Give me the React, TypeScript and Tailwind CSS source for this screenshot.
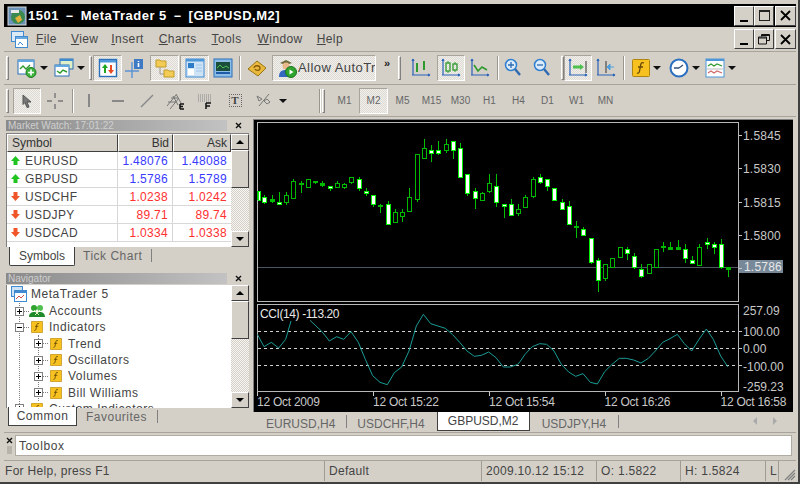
import type { ReactNode } from "react";

const raised = "border border-t-white border-l-white border-r-[#404040] border-b-[#404040] bg-[#d4d0c8]";
const pressed =
  "border border-t-[#a8a49c] border-l-[#a8a49c] border-r-white border-b-white bg-[repeating-conic-gradient(#dedbd5_0_25%,#f0efeb_0_50%)] bg-[length:2px_2px]";

// [wickTop, wickBottom, bodyTop, bodyBottom, kind] in 3x crop units; kind 0 hollow, 1 white, 2 solid
const candles: number[][] = [
  [224, 252, 224, 252, 1], [238, 265, 243, 258, 1], [238, 260, 250, 254, 2], [228, 266, 257, 265, 1],
  [228, 267, 238, 257, 0], [188, 246, 196, 245, 0], [196, 231, 200, 202, 2], [188, 213, 189, 212, 0],
  [196, 204, 196, 198, 2], [196, 213, 202, 206, 2], [209, 226, 211, 217, 1], [196, 217, 202, 212, 0],
  [202, 218, 203, 212, 0], [182, 203, 183, 197, 0], [182, 226, 189, 217, 1], [217, 239, 224, 231, 1],
  [238, 272, 238, 265, 1], [263, 291, 268, 270, 2], [255, 326, 265, 325, 1], [278, 318, 289, 317, 0],
  [278, 318, 289, 299, 0], [216, 286, 243, 285, 0], [115, 258, 115, 250, 0], [68, 125, 97, 125, 0],
  [87, 138, 102, 110, 1], [74, 116, 102, 110, 1], [68, 110, 83, 103, 0], [74, 130, 74, 102, 1],
  [82, 185, 97, 184, 1], [175, 240, 175, 231, 1], [216, 280, 224, 245, 1], [229, 253, 230, 253, 0],
  [175, 231, 202, 225, 0], [175, 272, 211, 258, 1], [265, 305, 265, 271, 1], [250, 298, 265, 298, 1],
  [265, 300, 278, 290, 0], [238, 272, 243, 272, 0], [183, 245, 189, 239, 0], [175, 203, 183, 197, 1],
  [189, 225, 189, 211, 1], [216, 253, 217, 252, 1], [250, 281, 257, 279, 1], [256, 326, 271, 325, 1],
  [316, 367, 330, 332, 2], [332, 360, 338, 358, 1], [365, 445, 366, 439, 1], [425, 527, 431, 493, 1],
  [445, 495, 445, 486, 0], [425, 455, 425, 453, 0], [392, 425, 392, 422, 0], [392, 432, 398, 412, 1],
  [412, 458, 420, 452, 1], [445, 485, 458, 480, 1], [445, 473, 445, 472, 0], [398, 454, 398, 453, 0],
  [378, 407, 390, 394, 2], [378, 400, 392, 399, 2], [371, 400, 392, 399, 2], [385, 440, 398, 426, 1],
  [420, 445, 431, 440, 1], [385, 447, 392, 446, 0], [365, 400, 378, 385, 1], [378, 413, 385, 394, 1],
  [370, 458, 385, 453, 1], [452, 482, 452, 458, 2],
];

const cciLeft = "22,100 42,137 64,124 86,141 107,115 123,60";
const cciA = [[180,58],[216,92],[238,120],[260,107],[281,115],[303,92],[325,124],[346,175],[368,224],[390,244],[412,251],[433,215],[455,198],[477,150],[499,75],[520,40],[542,68],[564,75],[586,82],[607,100],[629,124],[651,150],[673,166],[694,163],[716,153],[738,170],[760,198],[781,198],[803,190]];
const cciB = [[0,182],[15,160],[37,137],[59,128],[80,130],[102,150],[124,190],[146,213],[167,226],[189,218],[211,244],[232,249],[254,212],[276,190],[298,172],[319,172],[341,177],[363,186],[385,172],[406,150],[428,124],[450,113],[472,100],[493,128],[515,150],[537,115],[559,84],[580,115],[602,165],[624,198]];

const pts1 = cciLeft.split(" ").map((p) => {
  const [x, y] = p.split(",").map(Number);
  return `${250 + x / 3},${300 + y / 3}`;
}).join(" ");
const pts2 = [...cciA.map(([x, y]) => [250 + x / 3, 300 + y / 3]), ...cciB.map(([x, y]) => [520 + x / 3, 300 + y / 3])]
  .map((p) => p.join(",")).join(" ");

const Arrow = () => <span className="ml-[3px] h-0 w-0 shrink-0 border-x-[4px] border-t-[4px] border-x-transparent border-t-[#111]" />;
const Grip = ({ className = "" }: { className?: string }) => (
  <div className={`h-[24px] w-[3px] shrink-0 border border-t-white border-l-white border-r-[#808080] border-b-[#808080] ${className}`} />
);
const Sep = ({ className = "" }: { className?: string }) => (
  <div className={`h-[24px] w-[2px] shrink-0 border-l border-r border-l-[#9a968e] border-r-white ${className}`} />
);
const Tool = ({ children, w = 28, active = false, className = "" }: { children: ReactNode; w?: number; active?: boolean; className?: string }) => (
  <div
    style={{ width: w }}
    className={`flex h-[26px] shrink-0 items-center justify-center ${active ? pressed : ""} ${className}`}
  >
    {children}
  </div>
);

const Axes = ({ children }: { children?: ReactNode }) => (
  <svg width="20" height="20" viewBox="0 0 20 20" fill="none">
    <path d="M2 1v16M1 17h18M2 1l-1 2M2 1l1 2M19 17l-2-1M19 17l-2 1" stroke="#2a62b8" strokeWidth="1.2" />
    {children}
  </svg>
);
const NewChartIcon = () => (
  <svg width="20" height="20" viewBox="0 0 20 20" fill="none">
    <rect x="1" y="2" width="16" height="14" fill="#fff" stroke="#2a6fb8" />
    <path d="M1 2h16v2H1z" fill="#62a8e0" />
    <path d="M3 11l3-3 3 3 4-4" stroke="#2e9a2e" strokeWidth="1.4" />
    <circle cx="14" cy="14.500" r="5" fill="#3cb43c" stroke="#1d7a1d" />
    <path d="M14 11.500v6M11 14.500h6" stroke="#fff" strokeWidth="1.6" />
  </svg>
);
const ProfileIcon = () => (
  <svg width="20" height="20" viewBox="0 0 20 20" fill="none">
    <rect x="6" y="1" width="13" height="10" fill="#dff0c8" stroke="#2a6fb8" />
    <path d="M6 1h13v2H6z" fill="#3c8ad0" />
    <rect x="1" y="7" width="14" height="11" fill="#fff" stroke="#2a6fb8" />
    <path d="M1 7h14v2H1z" fill="#62a8e0" />
    <path d="M3 13l3 2 3-3 4 2" stroke="#2e9a2e" strokeWidth="1.4" />
  </svg>
);
const WatchIcon = () => (
  <svg width="20" height="20" viewBox="0 0 20 20" fill="none">
    <rect x="1.500" y="1.500" width="17" height="17" fill="#fff" stroke="#2a6fb8" strokeWidth="1.4" />
    <path d="M2 2h16v2.500H2z" fill="#4d97d8" />
    <path d="M7 6l3 4H8v5H6v-5H4z" fill="#1fa51f" />
    <path d="M13 16l-3-4h2V7h2v5h2z" fill="#e84b22" />
  </svg>
);
const DataIcon = () => (
  <svg width="20" height="20" viewBox="0 0 20 20" fill="none">
    <path d="M8 4v16M1 13h14" stroke="#5b93d6" strokeWidth="1.4" />
    <rect x="10" y="1" width="9" height="10" fill="#3f7ac4" />
    <path d="M14.500 3v1M14.500 5v4" stroke="#fff" strokeWidth="1.6" />
  </svg>
);
const FolderIcon = () => (
  <svg width="20" height="20" viewBox="0 0 20 20" fill="none">
    <path d="M1 2h4l1 1h5v6H1z" fill="#f2cc55" stroke="#c29b28" />
    <path d="M5 9v7h4" stroke="#9a968e" />
    <path d="M9 12h4l1 1h5v6H9z" fill="#f2cc55" stroke="#c29b28" />
  </svg>
);
const NavPanelIcon = () => (
  <svg width="20" height="20" viewBox="0 0 20 20" fill="none">
    <rect x="1" y="1" width="18" height="18" fill="#cfe3f7" stroke="#3f8ad0" />
    <path d="M1 1h18v2.500H1z" fill="#4d97d8" />
    <rect x="3" y="5" width="6" height="5" fill="#2d7cc8" />
    <rect x="3" y="11" width="6" height="6" fill="#fff" />
    <path d="M11 7h6M11 10h6M11 13h6" stroke="#9fc4e8" />
  </svg>
);
const TerminalIcon = () => (
  <svg width="20" height="20" viewBox="0 0 20 20" fill="none">
    <rect x="1" y="1" width="18" height="18" fill="#8cbce8" stroke="#2a6fb8" />
    <rect x="3" y="4" width="14" height="9" fill="#1a4d3a" />
    <path d="M4 10l3-3 3 3 3-2 3 2" stroke="#52c052" />
    <path d="M3 15h14" stroke="#1f5ca8" strokeWidth="2" />
  </svg>
);
const BookIcon = () => (
  <svg width="20" height="20" viewBox="0 0 20 20" fill="none">
    <path d="M1 11L10 3l9 7-8 8z" fill="#e8b93a" stroke="#9a7414" />
    <path d="M7 10c0-3 6-3 6 0s-4 3-5 1" stroke="#8a5a10" strokeWidth="1.300" />
  </svg>
);
const AutoTradeIcon = () => (
  <svg width="20" height="20" viewBox="0 0 20 20" fill="none" className="shrink-0">
    <path d="M3 5l6-3 6 3-6 2z" fill="#6d6a3a" />
    <circle cx="9" cy="8" r="3.500" fill="#e8b88a" />
    <path d="M2 19c0-6 3-7 7-7s6 2 6 7z" fill="#3468c0" />
    <circle cx="14" cy="14" r="5.500" fill="#2fa52f" stroke="#1a751a" />
    <path d="M12.500 11.500v5l4-2.500z" fill="#fff" />
  </svg>
);
const ZoomIcon = ({ plus }: { plus?: boolean }) => (
  <svg width="18" height="20" viewBox="0 0 18 20" fill="none">
    <circle cx="7" cy="7" r="5.500" fill="#dcecfb" stroke="#2e7fd0" strokeWidth="1.500" />
    <path d={plus ? "M4 7h6M7 4v6" : "M4 7h6"} stroke="#2e6ab0" strokeWidth="1.300" />
    <path d="M11 11l5 6" stroke="#2e6ab0" strokeWidth="2.400" />
  </svg>
);
const FuncIcon = ({ size = 18 }: { size?: number }) => (
  <svg width={size} height={size} viewBox="0 0 18 18" fill="none">
    <rect x="0.500" y="0.500" width="17" height="17" rx="1" fill="#f7c21f" stroke="#b08410" />
    <path d="M12 4c-2-1-3 0-3.300 2L7.500 12c-.3 2-1.500 2.500-2.500 2M6 8h5" stroke="#6a4a08" strokeWidth="1.300" />
  </svg>
);
const ClockIcon = () => (
  <svg width="20" height="20" viewBox="0 0 20 20" fill="none">
    <circle cx="10" cy="10" r="8.500" fill="#fff" stroke="#2a6fc0" strokeWidth="2" />
    <path d="M10 10l4-3M10 10H5" stroke="#33507a" strokeWidth="1.300" />
  </svg>
);
const OscIcon = () => (
  <svg width="20" height="20" viewBox="0 0 20 20" fill="none">
    <rect x="1" y="1" width="18" height="18" fill="#fff" stroke="#4d97d8" />
    <path d="M1 1h18v2H1z" fill="#4d97d8" />
    <path d="M3 8l3-2 3 2 3-2 5 2" stroke="#2e9a2e" strokeWidth="1.200" />
    <path d="M2 11h16" stroke="#bbb" />
    <path d="M3 15l3-2 3 2 3-2 5 2" stroke="#d06a6a" strokeWidth="1.200" />
  </svg>
);

const Fn = ({ label, active, className = "" }: { label: string; active?: boolean; className?: string }) => (
  <div className={`flex h-[26px] w-[29px] shrink-0 items-center justify-center text-[10px] text-[#666] ${active ? pressed : ""} ${className}`}>{label}</div>
);

const Menu = ({ first, rest, left }: { first: string; rest: string; left: number }) => (
  <span style={{ marginLeft: left }} className="text-[12px] tracking-[0.4px] text-[#444]">
    <span className="underline">{first}</span>
    {rest}
  </span>
);

const CloseGlyph = () => (
  <svg width="7" height="7" viewBox="0 0 7 7"><path d="M1 1l5 5M6 1L1 6" stroke="#111" strokeWidth="1.400" /></svg>
);
const PanelTitle = ({ text }: { text: string }) => (
  <div className="flex h-[11px] items-center bg-gradient-to-r from-[#8a8a8a] to-[#c8c8c8] pl-[2px] text-[10px] leading-none text-[#cfcfcf]">
    <span className="flex-1">{text}</span>
    <span className="flex h-full w-[22px] items-center justify-center bg-[#d4d0c8]"><CloseGlyph /></span>
  </div>
);

const Scrollbar = ({ thumb }: { thumb: number }) => (
  <div className="flex w-[18px] shrink-0 flex-col">
    <div className={`flex h-[16px] items-center justify-center ${raised}`}>
      <span className="h-0 w-0 border-x-[4px] border-b-[4px] border-x-transparent border-b-black" />
    </div>
    <div style={{ height: thumb }} className={raised} />
    <div className="flex-1 bg-[repeating-conic-gradient(#d4d0c8_0_25%,#f6f5f2_0_50%)] bg-[length:2px_2px]" />
    <div className={`flex h-[16px] items-center justify-center ${raised}`}>
      <span className="h-0 w-0 border-x-[4px] border-t-[4px] border-x-transparent border-t-black" />
    </div>
  </div>
);

const quotes = [
  { s: "EURUSD", b: "1.48076", a: "1.48088", up: true },
  { s: "GBPUSD", b: "1.5786", a: "1.5789", up: true },
  { s: "USDCHF", b: "1.0238", a: "1.0242", up: false },
  { s: "USDJPY", b: "89.71", a: "89.74", up: false },
  { s: "USDCAD", b: "1.0334", a: "1.0338", up: false },
];

const QuoteArrow = ({ up }: { up: boolean }) => (
  <svg width="11" height="11" viewBox="0 0 11 11" className="ml-[3px] mr-[4px] shrink-0">
    {up ? <path d="M5.500 1L10 6H7.500v4h-4V6H1z" fill="#1fc41f" /> : <path d="M5.500 10L10 5H7.500V1h-4v4H1z" fill="#f0552a" />}
  </svg>
);

const MarketWatch = () => (
  <div className="flex flex-col">
    <PanelTitle text="Market Watch: 17:01:22" />
    <div className="mt-[2px] flex h-[114px] border-l border-t border-[#808080]">
      <div className="flex flex-1 flex-col overflow-hidden bg-white">
        <div className="flex h-[18px] shrink-0 bg-[#d4d0c8] text-[12px] text-[#333]">
          <div className={`w-[111px] pl-[4px] leading-[16px] ${raised}`}>Symbol</div>
          <div className={`w-[55px] pr-[3px] text-right leading-[16px] ${raised}`}>Bid</div>
          <div className={`flex-1 pr-[3px] text-right leading-[16px] ${raised}`}>Ask</div>
        </div>
        {quotes.map((q) => (
          <div key={q.s} className={`flex h-[18px] shrink-0 items-center border-b border-[#d8d8d8] text-[12px] ${q.up ? "text-[#3a3aff]" : "text-[#ff3030]"}`}>
            <div className="flex w-[111px] items-center border-r border-[#d8d8d8] text-[#444]">
              <QuoteArrow up={q.up} />
              <span className="tracking-[0.4px]">{q.s}</span>
            </div>
            <div className="w-[55px] border-r border-[#d8d8d8] pr-[4px] text-right tracking-[0.3px]">{q.b}</div>
            <div className="flex-1 pr-[4px] text-right tracking-[0.3px]">{q.a}</div>
          </div>
        ))}
      </div>
      <Scrollbar thumb={38} />
    </div>
    <div className="flex h-[19px] items-start pl-[3px] text-[12px] text-[#666]">
      <div className="flex h-[19px] w-[66px] items-center justify-center rounded-b-[2px] border border-t-0 border-[#404040] bg-white text-[#444]">Symbols</div>
      <span className="ml-[8px] leading-[18px] tracking-[0.5px]">Tick Chart</span>
      <span className="ml-[9px] mt-[2px] h-[13px] w-px bg-[#808080]" />
    </div>
  </div>
);

const Expander = ({ open }: { open?: boolean }) => (
  <span className="relative flex h-[9px] w-[9px] shrink-0 items-center justify-center border border-[#808080] bg-white">
    <span className="absolute h-px w-[5px] bg-black" />
    {!open && <span className="absolute h-[5px] w-px bg-black" />}
  </span>
);
const Dots = () => <span className="w-[5px] shrink-0 border-t border-dotted border-[#808080]" />;

const AccountsIcon = () => (
  <svg width="16" height="14" viewBox="0 0 16 14">
    <circle cx="5" cy="4" r="3" fill="#2fa52f" />
    <circle cx="11" cy="4" r="3" fill="#4fc04f" />
    <path d="M0 13c0-4 3-5 5-5s5 1 5 5zM7 13c0-4 2-5 4-5s5 1 5 5z" fill="#1e8a2a" />
    <path d="M5 6l5 5M11 6l-5 5" stroke="#e0f0c0" />
  </svg>
);

const TreeRow = ({ indent, label, icon, open }: { indent: number; label: string; icon: ReactNode; open?: boolean }) => (
  <div style={{ paddingLeft: indent }} className="flex h-[16.300px] shrink-0 items-center text-[12px] tracking-[0.5px] text-[#444]">
    <Expander open={open} />
    <Dots />
    <span className="mr-[4px] flex w-[16px] justify-center">{icon}</span>
    <span>{label}</span>
  </div>
);

const Navigator = () => (
  <div className="mt-[7px] flex flex-col">
    <PanelTitle text="Navigator" />
    <div className="mt-[1px] flex h-[123px] border-l border-[#808080]">
      <div className="relative flex flex-1 flex-col overflow-hidden bg-white">
        <div className="absolute bottom-0 left-[12px] top-[18px] border-l border-dotted border-[#808080]" />
        <div className="absolute left-[31px] top-[50px] h-[66px] border-l border-dotted border-[#808080]" />
        <div className="flex h-[18px] shrink-0 items-center pl-[4px] text-[12px] tracking-[0.5px] text-[#444]">
          <svg width="16" height="16" viewBox="0 0 16 16" className="mr-[4px]">
            <rect x="0.500" y="0.500" width="11" height="10" fill="#cfe3f7" stroke="#3f8ad0" />
            <rect x="3.500" y="4.500" width="12" height="11" fill="#fff" stroke="#3f8ad0" />
            <path d="M4 5h11v2H4z" fill="#3f8ad0" />
            <path d="M5 13l3-3 2 2 3-3" stroke="#d05050" fill="none" />
          </svg>
          MetaTrader 5
        </div>
        <div className="relative flex flex-col">
          <TreeRow indent={8} label="Accounts" icon={<AccountsIcon />} />
          <TreeRow indent={8} label="Indicators" icon={<FuncIcon size={12} />} open />
          <TreeRow indent={27} label="Trend" icon={<FuncIcon size={12} />} />
          <TreeRow indent={27} label="Oscillators" icon={<FuncIcon size={12} />} />
          <TreeRow indent={27} label="Volumes" icon={<FuncIcon size={12} />} />
          <TreeRow indent={27} label="Bill Williams" icon={<FuncIcon size={12} />} />
          <TreeRow indent={8} label="Custom Indicators" icon={<FuncIcon size={12} />} />
        </div>
      </div>
      <Scrollbar thumb={38} />
    </div>
    <div className="relative z-10 flex h-[18px] items-start pl-[2px] text-[12px] text-[#666]">
      <div className="-mt-[1px] flex h-[19px] w-[69px] items-center justify-center border border-t-0 border-[#404040] bg-white tracking-[0.5px] text-[#444]">Common</div>
      <span className="ml-[9px] leading-[18px] tracking-[0.5px]">Favourites</span>
      <span className="ml-[10px] mt-[2px] h-[13px] w-px bg-[#808080]" />
    </div>
  </div>
);

const Chart = () => {
  const mono = "'Liberation Sans',sans-serif";
  const pLabels = [["1.5845", 138.5, 134], ["1.5830", 172, 167], ["1.5815", 205.500, 201], ["1.5800", 239, 234]] as const;
  const cLabels = [["257.09", 314], ["100.00", 335], ["0.00", 352], ["-100.00", 369.500], ["-259.23", 389.500]] as const;
  const xLabels = [["12 Oct 2009", 257], ["12 Oct 15:22", 373], ["12 Oct 15:54", 489], ["12 Oct 16:26", 604.500], ["12 Oct 16:58", 720.500]] as const;
  return (
    <div className="h-[293px] w-[540px] border-l border-t border-[#808080] bg-black">
      <svg width="540" height="293" viewBox="254 119 540 293" fontFamily={mono} fontSize="12" fill="#c8c8c8">
        <rect x="257.500" y="121.500" width="481" height="179" fill="none" stroke="#b8b8b8" />
        <rect x="257.500" y="303.500" width="481" height="87" fill="none" stroke="#b8b8b8" />
        <path d="M258 266.500H738" stroke="#4a5662" />
        {candles.map((c, i) => {
          const cx = Math.round(257 + 7.25 * i) + 0.5;
          const [wt, wb, bt, bb, kind] = c.map((v, j) => (j < 4 ? Math.round(115 + v / 3) : v));
          const top = bt + 0.5;
          const h = Math.max(bb - bt, 1);
          const clipLeft = i === 0;
          return (
            <g key={i} shapeRendering="crispEdges">
              <path d={`M${cx} ${wt}V${wb}`} stroke="#00c000" />
              {clipLeft ? (
                <rect x={258} y={top} width={2} height={h} fill="#fff" stroke="#00f000" />
              ) : (
                <rect x={cx - 2} y={top} width={4} height={h} fill={kind === 1 ? "#fff" : kind === 2 ? "#00c000" : "#000"} stroke={kind === 1 ? "#00f000" : "#00b800"} />
              )}
            </g>
          );
        })}
        <path d="M258 330.500H738M258 347.500H738M258 364.500H738" stroke="#d0d0d0" strokeDasharray="3 3" />
        <polyline points={pts1} fill="none" stroke="#1a9c96" />
        <polyline points={pts2} fill="none" stroke="#1a9c96" />
        <rect x="259" y="305" width="85" height="14" fill="#000" />
        <text x="260" y="317" fill="#e8e8e8" letterSpacing="-0.4">CCI(14) -113.20</text>
        {pLabels.map(([t, y, tick]) => (
          <g key={t}>
            <path d={`M739 ${tick + 0.5}h3`} stroke="#c8c8c8" />
            <text x="743" y={y} letterSpacing="0.2">{t}</text>
          </g>
        ))}
        <rect x="739" y="259" width="44" height="13" fill="#778899" />
        <path d="M739 267.500h3" stroke="#c8c8c8" />
        <text x="744" y="270" fill="#e8e8e8" letterSpacing="0.2">1.5786</text>
        {cLabels.map(([t, y]) => (
          <text key={t} x={743} y={y}>{t}</text>
        ))}
        <path d="M739 330.500h3M739 347.500h3M739 364.500h3" stroke="#c8c8c8" />
        {xLabels.map(([t, x]) => (
          <g key={t}>
            <path d={`M${Math.round(x) + 0.5} 391v4`} stroke="#c8c8c8" />
            <text x={x} y="405" letterSpacing="-0.25">{t}</text>
          </g>
        ))}
      </svg>
    </div>
  );
};

const StatusCell = ({ w, children }: { w: number; children?: ReactNode }) => (
  <div style={{ width: w }} className="flex h-full shrink-0 items-center overflow-hidden border-r border-[#a09c94] pl-[4px] text-[12px] tracking-[0.3px] text-[#444]">
    {children}
  </div>
);

export default function App() {
  return (
    <div className="flex h-[484px] w-[800px] flex-col overflow-hidden border-b-2 border-r-2 border-b-[#404040] border-r-[#404040] bg-[#d4d0c8] pl-[4px] pr-[2px] pt-[4px] [font-family:'Liberation_Sans',sans-serif]">
      <div className="flex h-[23px] shrink-0 items-center bg-black pl-[3px] text-white">
        <svg width="20" height="20" viewBox="0 0 20 20">
          <rect x="1" y="1" width="18" height="18" fill="#6b92b8" stroke="#d8d8d8" />
          <circle cx="11" cy="11" r="7" fill="#3a8a50" />
          <path d="M4 4h8v3H4z" fill="#e8e8e8" />
          <path d="M8 12l5-3 2 5-4 3z" fill="#e2b13a" />
        </svg>
        <span className="ml-[1px] flex-1 text-[13px] font-bold tracking-[0.5px]">1501 － MetaTrader 5 － [GBPUSD,M2]</span>
        <div className="flex">
          <div className={`flex h-[20px] w-[20px] items-end justify-center pb-[3px] ${raised}`}><span className="h-[2px] w-[8px] bg-black" /></div>
          <div className={`flex h-[20px] w-[20px] items-center justify-center ${raised}`}><span className="h-[11px] w-[11px] border border-t-2 border-[#222]" /></div>
          <div className={`ml-px flex h-[20px] w-[21px] items-center justify-center ${raised}`}>
            <svg width="11" height="11" viewBox="0 0 11 11"><path d="M1 1l9 9M10 1l-9 9" stroke="#000" strokeWidth="1.800" /></svg>
          </div>
        </div>
      </div>

      <div className="flex h-[25px] shrink-0 items-center border-b border-[#a8a49c]">
        <svg width="17" height="17" viewBox="0 0 17 17" className="ml-[7px]">
          <rect x="0.500" y="0.500" width="12" height="10" fill="#dbe9f7" stroke="#3f8ad0" />
          <rect x="4.500" y="5.500" width="12" height="11" fill="#fff" stroke="#3f8ad0" />
          <path d="M5 6h11v2H5z" fill="#6aa8e0" />
          <path d="M7 14l2-3 3 3" stroke="#3f8ad0" fill="none" />
        </svg>
        <Menu first="F" rest="ile" left={8} />
        <Menu first="V" rest="iew" left={14} />
        <Menu first="I" rest="nsert" left={13} />
        <Menu first="C" rest="harts" left={15} />
        <Menu first="T" rest="ools" left={15} />
        <Menu first="W" rest="indow" left={16} />
        <Menu first="H" rest="elp" left={14} />
        <div className="ml-auto flex">
          <div className={`flex h-[20px] w-[20px] items-end justify-center pb-[3px] ${raised}`}><span className="h-[2px] w-[8px] bg-black" /></div>
          <div className={`flex h-[20px] w-[20px] items-center justify-center ${raised}`}>
            <svg width="12" height="11" viewBox="0 0 12 11" fill="none"><path d="M3.500 2.500V.5h8v6h-3M.5 3h8v7h-8zM.5 4h8M3.500 1.500h8" stroke="#111" /></svg>
          </div>
          <div className={`ml-px flex h-[20px] w-[21px] items-center justify-center ${raised}`}>
            <svg width="11" height="11" viewBox="0 0 11 11"><path d="M1 1l9 9M10 1l-9 9" stroke="#000" strokeWidth="1.800" /></svg>
          </div>
        </div>
      </div>

      <div className="mt-[2px] flex h-[31px] shrink-0 items-center border-b border-[#a8a49c] pb-[2px]">
        <Grip className="ml-[2px]" />
        <span className="ml-[8px] flex"><NewChartIcon /></span>
        <Arrow />
        <span className="ml-[6px] flex"><ProfileIcon /></span>
        <Arrow />
        <Grip className="ml-[4px]" />
        <Tool w={29} active className="ml-[1px]"><WatchIcon /></Tool>
        <Tool w={24}><DataIcon /></Tool>
        <Tool w={29} active className="ml-[4px]"><FolderIcon /></Tool>
        <Tool w={29} active className="ml-px"><NavPanelIcon /></Tool>
        <Tool w={28}><TerminalIcon /></Tool>
        <Sep className="ml-[2px]" />
        <Tool w={28} className="ml-[2px]"><BookIcon /></Tool>
        <div className={`ml-px flex h-[26px] w-[104px] shrink-0 items-center overflow-hidden whitespace-nowrap pl-[4px] text-[13px] tracking-[0.45px] text-[#444] ${pressed}`}>
          <AutoTradeIcon />
          <span className="ml-[1px]">Allow AutoTra</span>
        </div>
        <span className="ml-[8px] -mt-[10px] text-[11px] font-bold leading-none text-[#222]">»</span>
        <Grip className="ml-[8px]" />
        <Tool w={24} className="ml-[8px]"><Axes><path d="M6 5v9M5 6h1M6 11h1M13 3v9M12 9h1M13 5h1" stroke="#2e9a2e" strokeWidth="2" /></Axes></Tool>
        <Tool w={28} active className="ml-[4px]"><Axes><rect x="5" y="5" width="4" height="8" stroke="#2e9a2e" strokeWidth="1.300" /><rect x="12" y="6" width="4" height="6" stroke="#2e9a2e" strokeWidth="1.300" /><path d="M7 3v2M7 13v2M14 4v2M14 12v2" stroke="#2e9a2e" /></Axes></Tool>
        <Tool w={24} className="ml-[3px]"><Axes><path d="M4 7l4 6 4-4 5 3" stroke="#2e9a2e" strokeWidth="1.600" /></Axes></Tool>
        <Sep className="ml-[5px]" />
        <Tool w={24} className="ml-[2px]"><ZoomIcon plus /></Tool>
        <Tool w={24} className="ml-[5px]"><ZoomIcon /></Tool>
        <Grip className="ml-[7px]" />
        <Tool w={28} active><Axes><path d="M5 9h7" stroke="#4fc04f" strokeWidth="3" /><path d="M12 6l4 3-4 3z" fill="#4fc04f" /><path d="M18 3v12" stroke="#333" /></Axes></Tool>
        <Tool w={24} className="ml-[2px]"><Axes><path d="M10 3v12" stroke="#333" /><path d="M18 9h-4M14 6l-3 3 3 3z" fill="#4f9fe0" stroke="#4f9fe0" /></Axes></Tool>
        <Sep className="ml-[5px]" />
        <span className="ml-[7px] flex"><FuncIcon /></span>
        <Arrow />
        <span className="ml-[8px] flex"><ClockIcon /></span>
        <Arrow />
        <span className="ml-[5px] flex"><OscIcon /></span>
        <Arrow />
      </div>

      <div className="mt-[2px] flex h-[30px] shrink-0 items-center border-b border-[#a8a49c] pb-[2px] text-[#555]">
        <Grip className="ml-[2px]" />
        <Tool w={28} active className="ml-[4px]">
          <svg width="12" height="14" viewBox="0 0 12 14"><path d="M2 1l8 7H6l2 5-2 .5-2-5-2 2z" fill="#777" stroke="#555" /></svg>
        </Tool>
        <Tool w={24} className="ml-[2px]">
          <svg width="18" height="18" viewBox="0 0 18 18"><path d="M9 1v5M9 12v5M1 9h5M12 9h5" stroke="#777" strokeWidth="1.400" /></svg>
        </Tool>
        <Sep className="ml-[5px]" />
        <Tool w={24} className="ml-[3px]"><span className="h-[13px] w-[2px] bg-[#888]" /></Tool>
        <Tool w={24} className="ml-[5px]"><span className="h-[2px] w-[12px] bg-[#888]" /></Tool>
        <Tool w={24} className="ml-[5px]">
          <svg width="14" height="14" viewBox="0 0 14 14"><path d="M1 13L13 1" stroke="#888" strokeWidth="1.500" /></svg>
        </Tool>
        <Tool w={24} className="ml-[5px]">
          <svg width="20" height="18" viewBox="0 0 20 18" fill="none"><path d="M1 14l9-11M4 17l9-11M7 4l5 9M10 2l5 9M2 10h8M5 6h7" stroke="#777" /><path d="M14 12h4M14 12v5M14 14.500h3M14 17h4" stroke="#111" strokeWidth="1.500" /></svg>
        </Tool>
        <Tool w={24} className="ml-[5px]">
          <svg width="16" height="16" viewBox="0 0 16 16" fill="none"><path d="M1 2h13M1 4h13M1 6h13M1 8h13" stroke="#888" strokeDasharray="1 1" /><path d="M9 10h5M9 10v6M9 13h4" stroke="#111" strokeWidth="1.500" /></svg>
        </Tool>
        <Tool w={24} className="ml-[6px]">
          <div className="flex h-[13px] w-[13px] items-center justify-center border border-dotted border-[#666] text-[11px] font-bold leading-none text-[#444] [font-family:'Liberation_Serif',serif]">T</div>
        </Tool>
        <Tool w={24} className="ml-[5px]">
          <svg width="16" height="15" viewBox="0 0 16 15" fill="none"><path d="M1 3l5 3-3 2zM8 8l3-2 3 3-3 2zM3 13L13 1" stroke="#777" /></svg>
        </Tool>
        <Arrow />
        <Sep className="ml-[32px]" />
        <Grip className="ml-px" />
        <Fn label="M1" className="ml-[5px]" />
        <Fn label="M2" active />
        <Fn label="M5" />
        <Fn label="M15" />
        <Fn label="M30" />
        <Fn label="H1" />
        <Fn label="H4" />
        <Fn label="D1" />
        <Fn label="W1" />
        <Fn label="MN" />
      </div>

      <div className="flex min-h-0 flex-1">
        <div className="mt-[3px] flex w-[245px] shrink-0 flex-col pl-[2px]">
          <MarketWatch />
          <Navigator />
        </div>
        <div className="ml-[4px] mt-[2px] flex flex-col">
          <Chart />
          <div className="flex h-[21px] items-start pl-[2px] text-[12px] text-[#666]">
            <span className="ml-[11px] mt-[3px]">EURUSD,H4</span>
            <span className="ml-[11px] mt-[3px] h-[13px] w-px bg-[#808080]" />
            <span className="ml-[10px] mt-[3px]">USDCHF,H4</span>
            <div className="ml-[12px] flex h-[19px] w-[93px] items-center justify-center border border-t-0 border-[#404040] bg-white text-[#444]">GBPUSD,M2</div>
            <span className="ml-[12px] mt-[3px]">USDJPY,H4</span>
            <span className="ml-[12px] mt-[3px] h-[13px] w-px bg-[#808080]" />
            <span className="ml-[134px] mt-[5px] h-0 w-0 border-y-[4px] border-r-[4px] border-y-transparent border-r-[#aaa]" />
            <span className="ml-[16px] mt-[5px] h-0 w-0 border-y-[4px] border-l-[4px] border-y-transparent border-l-[#aaa]" />
          </div>
        </div>
      </div>

      <div className="flex h-[26px] shrink-0 items-center border-t border-[#a8a49c]">
        <div className="ml-[2px] flex w-[7px] flex-col items-center gap-[2px]">
          <CloseGlyph />
          <span className="h-[8px] w-[5px] bg-[#b8b4ac]" />
        </div>
        <div className="ml-[2px] flex h-[21px] w-[777px] items-center border border-[#b0aca4] bg-white pl-[3px] text-[12px] tracking-[0.6px] text-[#444]">Toolbox</div>
      </div>

      <div className="mb-[1px] mt-[2px] flex h-[21px] shrink-0 items-center border-t border-[#a8a49c]">
        <StatusCell w={321}><span className="-ml-[3px]">For Help, press F1</span></StatusCell>
        <StatusCell w={157}>Default</StatusCell>
        <StatusCell w={115}>2009.10.12 15:12</StatusCell>
        <StatusCell w={84}>O: 1.5822</StatusCell>
        <StatusCell w={85}>H: 1.5824</StatusCell>
        <StatusCell w={13}>L</StatusCell>
        <svg width="13" height="13" viewBox="0 0 13 13" className="ml-auto mt-[6px]">
          <path d="M12 2L2 12M12 5L5 12M12 8L8 12" stroke="#808080" strokeWidth="1.300" />
        </svg>
      </div>
    </div>
  );
}
